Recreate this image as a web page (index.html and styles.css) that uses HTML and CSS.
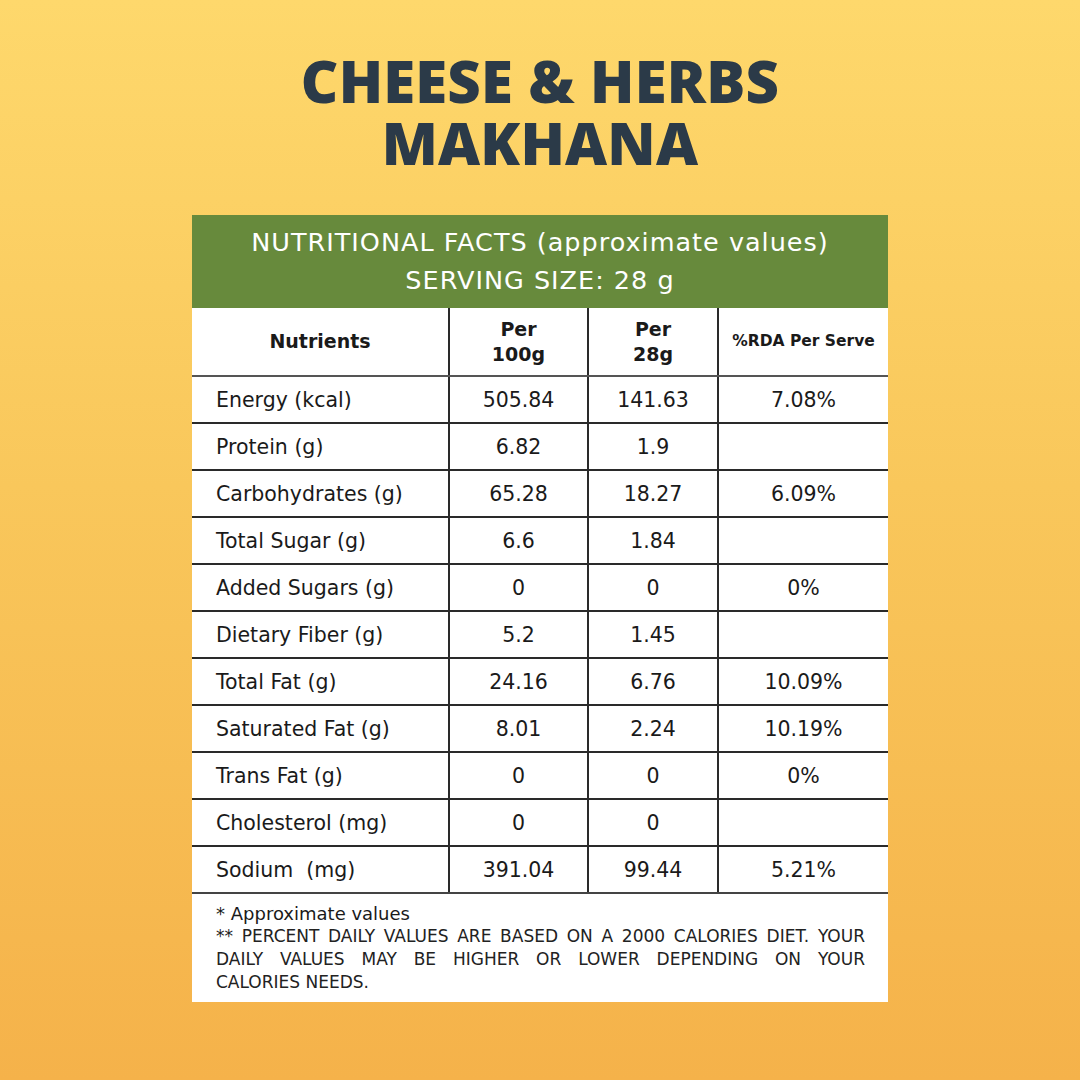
FILE: index.html
```html
<!DOCTYPE html>
<html>
<head>
<meta charset="utf-8">
<link rel="stylesheet" href="styles.css">
</head>
<body>
<div class="page">
  <h1 class="title">CHEESE &amp; HERBS<br>MAKHANA</h1>
  <div class="card">
    <div class="card-head">
      <div class="head-line">NUTRITIONAL FACTS (approximate values)</div>
      <div class="head-line">SERVING SIZE: 28 g</div>
    </div>
    <table class="facts">
      <colgroup>
        <col class="c1"><col class="c2"><col class="c3"><col class="c4">
      </colgroup>
      <thead>
        <tr class="hrow">
          <th class="name-h">Nutrients</th>
          <th>Per<br>100g</th>
          <th>Per<br>28g</th>
          <th class="rda-h">%RDA Per Serve</th>
        </tr>
      </thead>
      <tbody>
        <tr><td class="name">Energy (kcal)</td><td>505.84</td><td>141.63</td><td>7.08%</td></tr>
        <tr><td class="name">Protein (g)</td><td>6.82</td><td>1.9</td><td></td></tr>
        <tr><td class="name">Carbohydrates (g)</td><td>65.28</td><td>18.27</td><td>6.09%</td></tr>
        <tr><td class="name">Total Sugar (g)</td><td>6.6</td><td>1.84</td><td></td></tr>
        <tr><td class="name">Added Sugars (g)</td><td>0</td><td>0</td><td>0%</td></tr>
        <tr><td class="name">Dietary Fiber (g)</td><td>5.2</td><td>1.45</td><td></td></tr>
        <tr><td class="name">Total Fat (g)</td><td>24.16</td><td>6.76</td><td>10.09%</td></tr>
        <tr><td class="name">Saturated Fat (g)</td><td>8.01</td><td>2.24</td><td>10.19%</td></tr>
        <tr><td class="name">Trans Fat (g)</td><td>0</td><td>0</td><td>0%</td></tr>
        <tr><td class="name">Cholesterol (mg)</td><td>0</td><td>0</td><td></td></tr>
        <tr><td class="name">Sodium&nbsp; (mg)</td><td>391.04</td><td>99.44</td><td>5.21%</td></tr>
      </tbody>
    </table>
    <div class="notes">
      <p class="note1">* Approximate values</p>
      <p class="note2">
        <span class="ln">** PERCENT DAILY VALUES ARE BASED ON A 2000 CALORIES DIET. YOUR</span>
        <span class="ln">DAILY VALUES MAY BE HIGHER OR LOWER DEPENDING ON YOUR</span>
        <span class="ln last">CALORIES NEEDS.</span>
      </p>
    </div>
  </div>
</div>
</body>
</html>
```

FILE: styles.css
```css
* { box-sizing: border-box; }
html, body { margin: 0; padding: 0; }
body {
  width: 1080px;
  height: 1080px;
  background: linear-gradient(180deg, #fed86c 0%, #f9c75b 45%, #f5b24a 100%);
  font-family: "DejaVu Sans", "Open Sans", sans-serif;
  color: #1a1a1a;
  overflow: hidden;
}
.page {
  display: flex;
  flex-direction: column;
  align-items: center;
  padding-top: 50px;
}
.title {
  margin: 0;
  font-family: "Open Sans", sans-serif;
  font-weight: 800;
  font-size: 58px;
  line-height: 62px;
  letter-spacing: 0.2px;
  color: #2b3a48;
  text-align: center;
}
.card {
  margin-top: 41px;
  width: 696px;
  background: #ffffff;
}
.card-head {
  background: #678a3c;
  color: #ffffff;
  height: 93px;
  display: flex;
  flex-direction: column;
  justify-content: center;
  align-items: center;
  font-size: 25.5px;
  letter-spacing: 1px;
  line-height: 38px;
  padding-bottom: 2px;
}
.facts {
  width: 100%;
  border-collapse: collapse;
  table-layout: fixed;
}
.c1 { width: 257px; }
.c2 { width: 139px; }
.c3 { width: 130px; }
.c4 { width: 170px; }
.facts th, .facts td {
  border: 2px solid #2a2a2a;
  text-align: center;
  font-size: 20.5px;
  padding: 0;
  height: 47px;
  color: #1a1a1a;
}
.facts tr > :first-child { border-left: none; }
.facts tr > :last-child { border-right: none; }
.facts thead th { border-top: none; }
.facts tbody tr:last-child td { border-bottom-color: #444; }
.hrow th {
  height: 68px;
  font-weight: 700;
  font-size: 19px;
  line-height: 25px;
  border-bottom-color: #555;
}
.facts th.rda-h { font-size: 15.5px; }
.facts td.name {
  text-align: left;
  padding-left: 24px;
}
.notes {
  padding: 8px 23px 8px 24px;
}
.notes p { margin: 0; }
.note1 {
  font-size: 18px;
  line-height: 23px;
}
.note2 {
  font-size: 17px;
  line-height: 23px;
  color: #222;
}
.ln {
  display: block;
  white-space: nowrap;
  text-align: justify;
  text-align-last: justify;
}
.ln.last {
  text-align: left;
  text-align-last: left;
}
```
